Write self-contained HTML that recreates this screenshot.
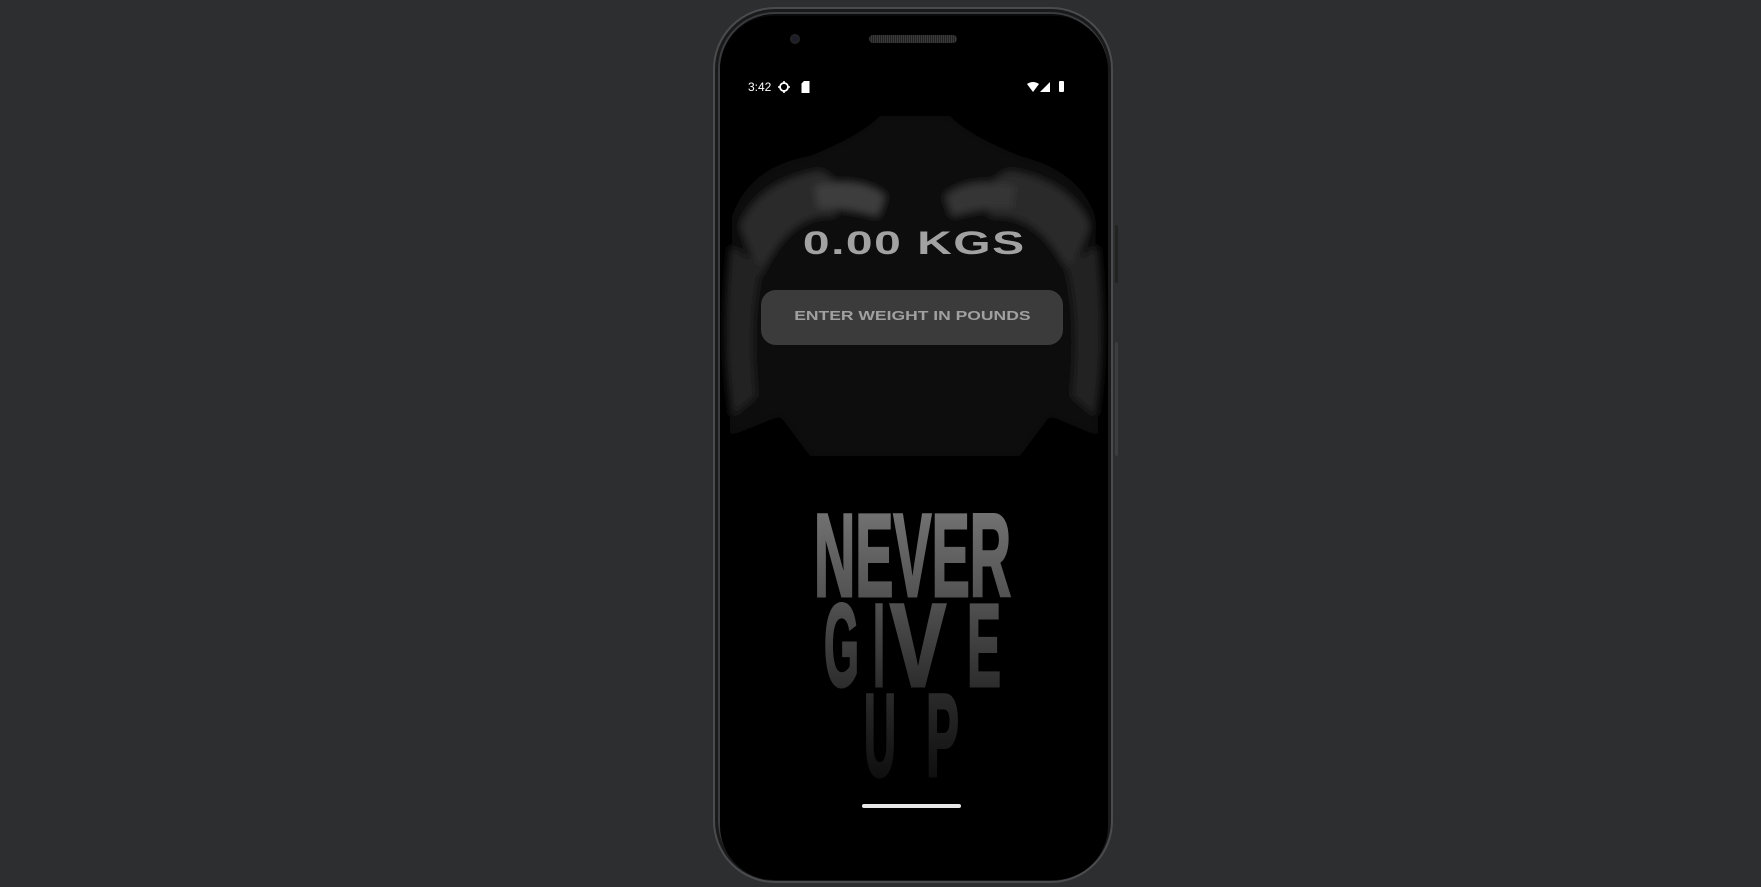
<!DOCTYPE html>
<html><head><meta charset="utf-8">
<style>
html,body{margin:0;padding:0;}
body{width:1761px;height:887px;background:#2d2e30;position:relative;overflow:hidden;font-family:"Liberation Sans",sans-serif;}
.phone{position:absolute;left:713px;top:7px;width:400px;height:876px;border-radius:62px;background:#0a0a0a;border:2px solid #4a4b4e;box-sizing:border-box;box-shadow:inset 0 0 0 3px #1a1a1a,inset 0 0 0 5px #3a3b3e;}
.screen{position:absolute;left:720px;top:16px;width:388px;height:864px;border-radius:54px;background:#000;overflow:hidden;}
.btn1{position:absolute;left:1115px;top:225px;width:3px;height:58px;background:#222;border-radius:2px;}
.btn2{position:absolute;left:1115px;top:342px;width:3px;height:114px;background:#3c3d40;border-radius:2px;}
.cam{position:absolute;left:790px;top:34px;width:10px;height:10px;border-radius:50%;background:#1b1d2a;box-shadow:inset 0 0 0 2px #222;}
.spk{position:absolute;left:869px;top:35px;width:88px;height:8px;border-radius:4px;background:repeating-linear-gradient(90deg,#3a3a3a 0 1px,#222 1px 2px);}
.abs{position:absolute;}
.kgs{position:absolute;left:720px;width:388px;top:225px;text-align:center;color:#a2a2a2;font-weight:bold;font-size:32px;letter-spacing:1px;}
.kgs span{display:inline-block;transform:scaleX(1.5);}
.button{position:absolute;left:761px;top:290px;width:302px;height:55px;border-radius:15px;background:rgba(64,64,64,0.9);}
.btxt{position:absolute;left:761px;width:302px;top:309px;text-align:center;color:#a0a0a0;font-weight:bold;font-size:12.5px;}
.btxt span{display:inline-block;transform:scaleX(1.4);}
.home{position:absolute;left:862px;top:804px;width:99px;height:4px;border-radius:2px;background:#e8e8e8;}
</style></head><body>
<div class="phone"></div>
<div class="btn1"></div><div class="btn2"></div>
<div class="screen">
<svg width="388" height="864" style="position:absolute;left:0;top:0">
<defs>
<filter id="b"><feGaussianBlur stdDeviation="4"/></filter>
</defs>
<g filter="url(#b)">
<path d="M 12 200 Q 30 150 90 140 Q 140 120 160 100 L 230 100 Q 250 120 300 140 Q 360 155 375 200 L 378 420 L 330 400 L 300 440 L 90 440 L 60 400 L 10 420 Z" fill="#0d0d0d"/>
<path d="M 20 210 Q 40 165 100 155 Q 125 165 115 200 Q 70 195 40 260 Z" fill="#2c2c2c"/>
<path d="M 370 210 Q 350 165 290 155 Q 260 165 270 200 Q 320 195 350 260 Z" fill="#2a2a2a"/>
<path d="M 95 170 Q 140 160 165 180 L 158 200 Q 120 190 98 192 Z" fill="#3c3c3c"/>
<path d="M 295 170 Q 250 160 225 180 L 232 200 Q 270 190 292 192 Z" fill="#363636"/>
<path d="M 10 230 Q 0 330 12 400 L 36 380 Q 28 300 42 250 Z" fill="#242424"/>
<path d="M 378 230 Q 388 330 376 400 L 352 380 Q 360 300 346 250 Z" fill="#202020"/>
</g>
<rect x="0" y="0" width="388" height="62" fill="#000"/>
</svg>
</div>
<div class="cam"></div><div class="spk"></div>
<div class="abs" style="left:748px;top:80px;color:#fff;font-size:12px;">3:42</div>
<svg class="abs" style="left:778px;top:81px" width="12" height="12" viewBox="0 0 12 12"><circle cx="6" cy="6" r="4" fill="none" stroke="#fff" stroke-width="1.8"/><path d="M6 0v3M6 9v3M0 6h3M9 6h3" stroke="#fff" stroke-width="1.6"/></svg>
<svg class="abs" style="left:801px;top:81px" width="9" height="12" viewBox="0 0 9 12"><path d="M3 0H8.5V12H0.5V2.5Z" fill="#fff"/></svg>
<svg class="abs" style="left:1027px;top:82px" width="12" height="10" viewBox="0 0 12 10"><path d="M0 2Q6 -2 12 2L6 10Z" fill="#fff"/></svg>
<svg class="abs" style="left:1040px;top:82px" width="10" height="10" viewBox="0 0 10 10"><path d="M10 0V10H0Z" fill="#fff"/></svg>
<div class="abs" style="left:1059px;top:81px;width:5px;height:11px;background:#fff;border-radius:1px;"></div>
<div class="kgs"><span>0.00 KGS</span></div>
<div class="button"></div>
<div class="btxt"><span>ENTER WEIGHT IN POUNDS</span></div>
<svg class="abs" style="left:0;top:0" width="1761" height="887">
<defs><linearGradient id="sg" gradientUnits="userSpaceOnUse" x1="0" y1="510" x2="0" y2="780"><stop offset="0" stop-color="#727272"/><stop offset="0.33" stop-color="#525252"/><stop offset="0.66" stop-color="#2c2c2c"/><stop offset="1" stop-color="#0e0e0e"/></linearGradient></defs>
<g fill="url(#sg)" stroke="url(#sg)" stroke-width="3" stroke-linejoin="miter" font-family="Liberation Sans Narrow, Liberation Sans, sans-serif" font-weight="bold" font-size="118">
<text x="814" y="596" textLength="197" lengthAdjust="spacingAndGlyphs">NEVER</text>
<text x="824" y="686" textLength="35" lengthAdjust="spacingAndGlyphs">G</text>
<text x="873" y="686" textLength="12" lengthAdjust="spacingAndGlyphs">I</text>
<text x="890" y="686" textLength="56" lengthAdjust="spacingAndGlyphs">V</text>
<text x="967" y="686" textLength="34" lengthAdjust="spacingAndGlyphs">E</text>
<text x="864" y="776" textLength="32" lengthAdjust="spacingAndGlyphs">U</text>
<text x="926" y="776" textLength="33" lengthAdjust="spacingAndGlyphs">P</text>
</g>
</svg>
<div class="home"></div>
</body></html>
